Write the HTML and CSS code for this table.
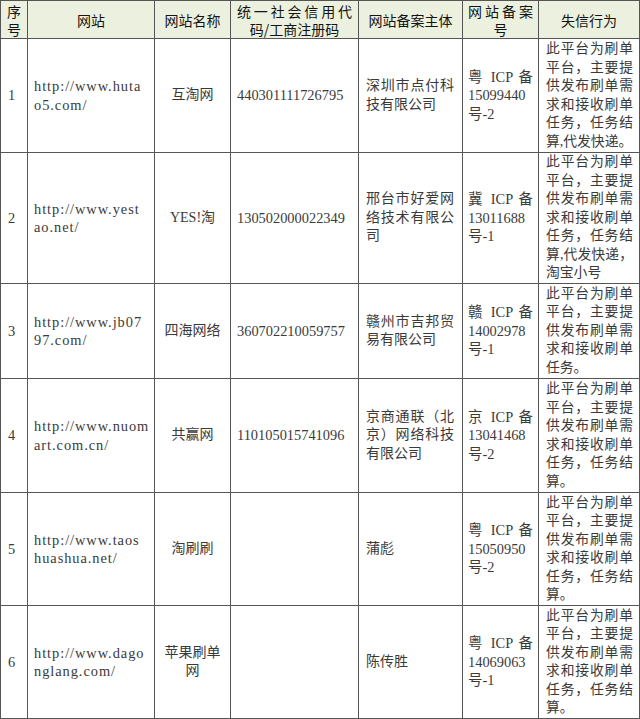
FILE: index.html
```html
<!DOCTYPE html>
<html lang="zh-CN">
<head>
<meta charset="utf-8">
<title>失信网站名单</title>
<link rel="stylesheet" href="styles.css">
</head>
<body>
<table class="grid">
  <colgroup>
    <col class="w-no"><col class="w-url"><col class="w-name"><col class="w-code"><col class="w-org"><col class="w-icp"><col class="w-desc">
  </colgroup>
  <thead>
    <tr class="head">
      <th><span class="hline">序</span><span class="hline">号</span></th>
      <th>网站</th>
      <th>网站名称</th>
      <th class="hl hl-code"><span class="jl hline">统一社会信用代</span><span class="hline">码/工商注册码</span></th>
      <th>网站备案主体</th>
      <th class="hl hl-icp"><span class="jl hline">网站备案</span><span class="hline">号</span></th>
      <th>失信行为</th>
    </tr>
  </thead>
  <tbody>
    <tr class="r1">
      <td class="no">1</td>
      <td class="url">http://www.huta<br>o5.com/</td>
      <td class="name">互淘网</td>
      <td class="code">440301111726795</td>
      <td class="org">深圳市点付科技有限公司</td>
      <td class="icp"><span class="jl">粤 ICP 备</span>15099440<br>号-2</td>
      <td class="desc">此平台为刷单平台，主要提供发布刷单需求和接收刷单任务，任务结算,代发快递。</td>
    </tr>
    <tr class="r2">
      <td class="no">2</td>
      <td class="url">http://www.yest<br>ao.net/</td>
      <td class="name">YES!淘</td>
      <td class="code">130502000022349</td>
      <td class="org">邢台市好爱网络技术有限公司</td>
      <td class="icp"><span class="jl">冀 ICP 备</span>13011688<br>号-1</td>
      <td class="desc">此平台为刷单平台，主要提供发布刷单需求和接收刷单任务，任务结算,代发快递，淘宝小号</td>
    </tr>
    <tr class="r3">
      <td class="no">3</td>
      <td class="url">http://www.jb07<br>97.com/</td>
      <td class="name">四海网络</td>
      <td class="code">360702210059757</td>
      <td class="org">赣州市吉邦贸易有限公司</td>
      <td class="icp"><span class="jl">赣 ICP 备</span>14002978<br>号-1</td>
      <td class="desc">此平台为刷单平台，主要提供发布刷单需求和接收刷单任务。</td>
    </tr>
    <tr class="r4">
      <td class="no">4</td>
      <td class="url">http://www.nuom<br>art.com.cn/</td>
      <td class="name">共赢网</td>
      <td class="code">110105015741096</td>
      <td class="org">京商通联（北京）网络科技有限公司</td>
      <td class="icp"><span class="jl">京 ICP 备</span>13041468<br>号-2</td>
      <td class="desc">此平台为刷单平台，主要提供发布刷单需求和接收刷单任务，任务结算。</td>
    </tr>
    <tr class="r5">
      <td class="no">5</td>
      <td class="url">http://www.taos<br>huashua.net/</td>
      <td class="name">淘刷刷</td>
      <td class="code"></td>
      <td class="org">蒲彪</td>
      <td class="icp"><span class="jl">粤 ICP 备</span>15050950<br>号-2</td>
      <td class="desc">此平台为刷单平台，主要提供发布刷单需求和接收刷单任务，任务结算。</td>
    </tr>
    <tr class="r6">
      <td class="no">6</td>
      <td class="url">http://www.dago<br>nglang.com/</td>
      <td class="name">苹果刷单<br>网</td>
      <td class="code"></td>
      <td class="org">陈传胜</td>
      <td class="icp"><span class="jl">粤 ICP 备</span>14069063<br>号-1</td>
      <td class="desc">此平台为刷单平台，主要提供发布刷单需求和接收刷单任务，任务结算。</td>
    </tr>
  </tbody>
</table>
</body>
</html>
```

FILE: styles.css
```css
html, body {
  margin: 0;
  padding: 0;
  background: #ffffff;
}

body {
  font-family: "Liberation Serif", "Noto Sans CJK SC", serif;
  color: #3a3a3a;
  overflow: hidden;
}

.grid {
  width: 640px;
  table-layout: fixed;
  border-collapse: separate;
  border-spacing: 1px;
  background: #555555;
}

.w-no { width: 26px; }
.w-url { width: 126px; }
.w-name { width: 75px; }
.w-code { width: 127px; }
.w-org { width: 103px; }
.w-icp { width: 75px; }
.w-desc { width: 100px; }

.grid th,
.grid td {
  padding: 0;
  vertical-align: middle;
  background: #ffffff;
  overflow: hidden;
}

.head th {
  height: 37px;
  background: #ebf1de;
  font-family: "Noto Sans CJK SC", sans-serif;
  font-weight: 400;
  font-size: 14px;
  line-height: 18px;
  color: #141414;
  text-align: center;
}

.hline {
  display: block;
  height: 18px;
}

.hl {
  text-align: left;
}

.head th.hl-code {
  padding: 0 6px;
}

.head th.hl-icp {
  padding: 0 5px;
}

.jl {
  display: block;
  text-align: justify;
  text-align-last: justify;
}

.r1 td { height: 113px; }
.r2 td { height: 130px; }
.r3 td { height: 94px; }
.r4 td { height: 113px; }
.r5 td { height: 112px; }
.r6 td { height: 112px; }

.grid td {
  font-size: 14px;
  line-height: 18.5px;
}

.grid td.no {
  font-size: 14.4px;
  padding-left: 7px;
}

.grid td.url {
  font-size: 14.4px;
  letter-spacing: 0.95px;
  padding-left: 6px;
  white-space: nowrap;
}

.grid td.name {
  text-align: center;
}

.grid td.code {
  font-size: 14.4px;
  padding-left: 6px;
}

.grid td.org {
  text-align: justify;
  padding: 0 8px 0 7px;
}

.grid td.icp {
  font-size: 14.4px;
  padding: 0 5px;
}

.grid td.desc {
  font-size: 13.8px;
  text-align: justify;
  padding: 0 6px 0 7px;
}
```
